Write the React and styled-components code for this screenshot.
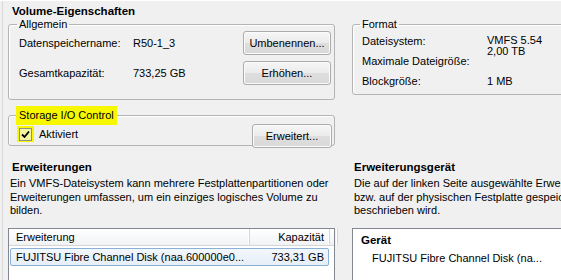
import React from "react";
import styled, { createGlobalStyle } from "styled-components";

const GlobalStyle = createGlobalStyle`
  html, body {
    margin: 0;
    padding: 0;
    background: #f0f0f0;
    overflow: hidden;
  }
  body {
    font-family: "Liberation Sans", Arial, sans-serif;
    font-size: 11px;
    color: #000;
  }
`;

const Frame = styled.div`
  width: 561px;
  height: 280px;
  box-sizing: border-box;
  overflow: hidden;
  border-top: 1px solid #ffffff;
  padding-left: 8px;
  display: grid;
  grid-template-columns: 327px 260px;
  grid-template-rows: auto auto;
  column-gap: 17px;
  background: linear-gradient(to right, transparent 2px, #d9d9d9 2px, #d9d9d9 3px, transparent 3px);
`;

const Column = styled.div`
  display: flex;
  flex-direction: column;
  min-width: 0;
  padding-top: ${(p) => p.$top || 0}px;
`;

const Title = styled.div`
  font-weight: bold;
  font-size: 11.5px;
  line-height: 13px;
  padding-left: ${(p) => p.$inset || 0}px;
  margin-top: ${(p) => p.$top || 0}px;
  white-space: nowrap;
`;

const GroupBox = styled.fieldset`
  margin: ${(p) => p.$top || 0}px 0 0 0;
  padding: ${(p) => p.$pad || "0 3px 14px 10px"};
  border: 1px solid #b4b4b4;
  border-radius: 3px;
  box-shadow: inset 1px 1px 0 #ffffff;
  min-width: 0;
`;

const Legend = styled.legend`
  padding: 0 2px;
  margin-left: -2px;
  line-height: 13px;
  white-space: nowrap;
`;

const MarkedLegend = styled(Legend)`
  padding: 0;
  margin-left: 0;
  background: #f7f700;
  box-shadow: 0 0 0 3px #f7f700;
`;

const PropGrid = styled.div`
  display: grid;
  grid-template-columns: 114px 1fr 88px;
  grid-auto-rows: 24px;
  row-gap: 6px;
  align-items: center;
`;

const Button = styled.button`
  height: ${(p) => p.$h || 24}px;
  width: ${(p) => p.$w || 88}px;
  padding: 0;
  font-family: inherit;
  font-size: 11px;
  color: #000;
  border: 1px solid #acacac;
  border-radius: 3px;
  background: linear-gradient(#f6f6f6 0%, #ebebeb 50%, #dedede 51%, #d9d9d9 100%);
  box-shadow: inset 0 0 0 1px #fbfbfb;
  margin-bottom: ${(p) => p.$under || 0}px;
`;

const IoRow = styled.div`
  display: flex;
  align-items: center;
  padding-top: 2px;
`;

const CheckWrap = styled.span`
  display: inline-flex;
  align-items: center;
  justify-content: center;
  width: 17px;
  height: 16px;
  margin-left: -2px;
  background: #f7f700;
`;

const CheckBox = styled.span`
  display: inline-flex;
  align-items: center;
  justify-content: center;
  width: 11px;
  height: 11px;
  border: 1px solid #8e8f8f;
  background: #f4f4a0;
`;

const CheckLabel = styled.span`
  margin-left: 5px;
  flex: 1;
`;

const FormatGrid = styled.div`
  display: grid;
  grid-template-columns: 125px 1fr;
  padding-top: 4px;
`;

const Stack = styled.div`
  display: flex;
  flex-direction: column;
  gap: ${(p) => p.$gap || 0}px;
  line-height: ${(p) => p.$lh || 13}px;
  white-space: nowrap;
`;

const Last = styled.div`
  margin-top: auto;
  line-height: 13px;
`;

const Paragraph = styled.div`
  margin-top: 3px;
  padding-left: 2px;
  line-height: 13.5px;
  white-space: nowrap;
`;

const ListView = styled.div`
  margin-top: 10px;
  height: 70px;
  border: 1px solid #828790;
  background: #ffffff;
`;

const ListHeader = styled.div`
  display: grid;
  grid-template-columns: 241px 80px 1fr;
  height: 16px;
  border-bottom: 1px solid #d5d5d5;
  background: linear-gradient(#ffffff 0%, #f7f8fa 60%, #f1f2f4 100%);
`;

const HeadCell = styled.div`
  line-height: 16px;
  padding: 0 ${(p) => (p.$right ? "5px" : "0")} 0 ${(p) => (p.$right ? "0" : "7px")};
  text-align: ${(p) => (p.$right ? "right" : "left")};
  border-right: 1px solid #d5d5d5;
  box-shadow: inset -1px 0 0 #ffffff;
`;

const ListRow = styled.div`
  display: grid;
  grid-template-columns: 1fr auto;
  margin: 2px 5px 0 1px;
  height: 16px;
  line-height: 16px;
  padding: 0 4px 0 5px;
  border: 1px solid #8ab0d6;
  border-radius: 2px;
  background: linear-gradient(#f2f7fc, #e6eef7);
  white-space: nowrap;
`;

const DeviceBox = styled.div`
  margin-top: 10px;
  height: 70px;
  border: 1px solid #828790;
  background: #ffffff;
  padding: 5px 0 0 8px;
`;

const DeviceHead = styled.div`
  font-weight: bold;
  font-size: 11.5px;
  line-height: 13px;
`;

const DeviceItem = styled.div`
  margin: 5px 0 0 11px;
  line-height: 13px;
  white-space: nowrap;
`;

const Check = () => (
  <svg width="9" height="9" viewBox="0 0 9 9">
    <path d="M1 4.5 L3.5 7 L8 1.5" fill="none" stroke="#000" strokeWidth="1.8" />
  </svg>
);

const App = () => {
  return (
    <>
      <GlobalStyle />
      <Frame>
        <Column $top={4}>
          <Title $inset={4}>Volume-Eigenschaften</Title>
          <GroupBox>
            <Legend>Allgemein</Legend>
            <PropGrid>
              <span>Datenspeichername:</span>
              <span>R50-1_3</span>
              <Button>Umbenennen...</Button>
              <span>Gesamtkapazität:</span>
              <span>733,25 GB</span>
              <Button>Erhöhen...</Button>
            </PropGrid>
          </GroupBox>
          <GroupBox $top={9} $pad="0 2px 1px 10px">
            <MarkedLegend>Storage I/O Control</MarkedLegend>
            <IoRow>
              <CheckWrap>
                <CheckBox>
                  <Check />
                </CheckBox>
              </CheckWrap>
              <CheckLabel>Aktiviert</CheckLabel>
              <Button $w={80} $h={24} $under={-4}>
                Erweitert...
              </Button>
            </IoRow>
          </GroupBox>
        </Column>

        <Column $top={17}>
          <GroupBox $pad="0 3px 6px 9px">
            <Legend>Format</Legend>
            <FormatGrid>
              <Stack $gap={7}>
                <span>Dateisystem:</span>
                <span>Maximale Dateigröße:</span>
                <span>Blockgröße:</span>
              </Stack>
              <Stack $lh={11}>
                <span>VMFS 5.54</span>
                <span>2,00 TB</span>
                <Last>1 MB</Last>
              </Stack>
            </FormatGrid>
          </GroupBox>
        </Column>

        <Column>
          <Title $inset={4} $top={15}>
            Erweiterungen
          </Title>
          <Paragraph>
            Ein VMFS-Dateisystem kann mehrere Festplattenpartitionen oder
            <br />
            Erweiterungen umfassen, um ein einziges logisches Volume zu
            <br />
            bilden.
          </Paragraph>
          <ListView>
            <ListHeader>
              <HeadCell>Erweiterung</HeadCell>
              <HeadCell $right>Kapazität</HeadCell>
              <HeadCell />
            </ListHeader>
            <ListRow>
              <span>FUJITSU Fibre Channel Disk (naa.600000e0...</span>
              <span>733,31 GB</span>
            </ListRow>
          </ListView>
        </Column>

        <Column>
          <Title $inset={2} $top={15}>
            Erweiterungsgerät
          </Title>
          <Paragraph>
            Die auf der linken Seite ausgewählte Erweiterung befindet sich auf dem unten
            <br />
            bzw. auf der physischen Festplatte gespeichert und
            <br />
            beschrieben wird.
          </Paragraph>
          <DeviceBox>
            <DeviceHead>Gerät</DeviceHead>
            <DeviceItem>FUJITSU Fibre Channel Disk (na...</DeviceItem>
          </DeviceBox>
        </Column>
      </Frame>
    </>
  );
};

export default App;
